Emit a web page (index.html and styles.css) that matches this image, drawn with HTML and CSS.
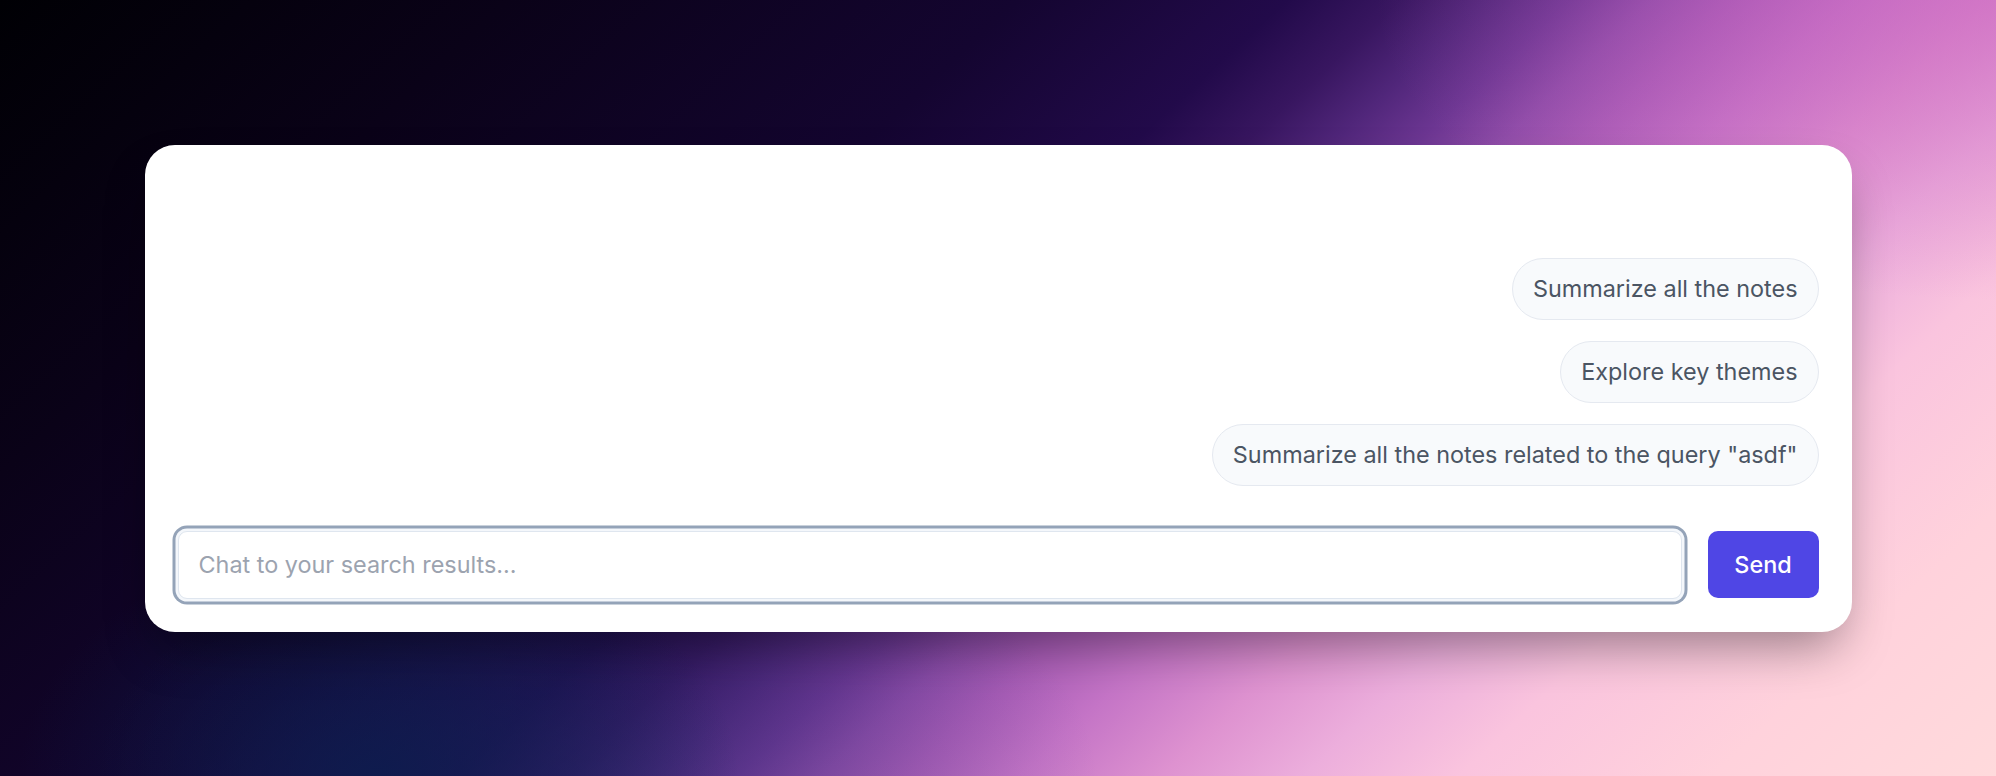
FILE: index.html
```html
<!DOCTYPE html>
<html lang="en">
<head>
<meta charset="utf-8">
<title>Chat</title>
<link rel="stylesheet" href="styles.css">
</head>
<body>
  <main class="card">
    <div class="messages">
      <button class="chip">Summarize all the notes</button>
      <button class="chip">Explore key themes</button>
      <button class="chip">Summarize all the notes related to the query "asdf"</button>
    </div>
    <form class="composer">
      <input class="chat-input" type="text" placeholder="Chat to your search results...">
      <button class="send" type="button">Send</button>
    </form>
  </main>
</body>
</html>
```
FILE: styles.css
```css
* { box-sizing: border-box; }
html, body { height: 100%; }
body {
  margin: 0;
  font-family: Inter, "Noto Sans", sans-serif;
  display: flex;
  align-items: center;
  justify-content: center;
  background:
    radial-gradient(ellipse 620px 300px at 100% 0%, rgba(200, 95, 190, 0.55) 0, rgba(200, 95, 190, 0) 100%),
    radial-gradient(ellipse 360px 240px at 19% 100%, rgba(10, 30, 78, 0.8) 0, rgba(10, 30, 78, 0) 100%),
    radial-gradient(ellipse 500px 260px at 30% 100%, rgba(40, 50, 120, 0.35) 0, rgba(40, 50, 120, 0) 100%),
    linear-gradient(137deg,
      #000004 0%,
      #0a0218 18%,
      #140530 36%,
      #220a4a 45.5%,
      #381660 49.5%,
      #50267a 52.5%,
      #6c3692 55.5%,
      #8e4ca8 58.5%,
      #a85cb6 61.5%,
      #c474c6 65.5%,
      #de92d0 70.5%,
      #ecaedc 75.5%,
      #fac4de 81%,
      #ffd2dc 90%,
      #ffdadc 100%);
}
.card {
  width: 1707px;
  height: 487px;
  background: #fff;
  border-radius: 30px;
  padding: 33px;
  display: flex;
  flex-direction: column;
  box-shadow: 0 25px 50px -12px rgba(0, 0, 0, 0.4);
}
.messages {
  flex: 1;
  display: flex;
  flex-direction: column;
  align-items: flex-end;
  justify-content: flex-end;
  gap: 21px;
}
.chip {
  font-family: inherit;
  font-size: 23.4px;
  line-height: 28px;
  color: #4b5563;
  background: #f8fafc;
  border: 1px solid #e5e9f0;
  border-radius: 31px;
  padding: 16px 20px;
  cursor: pointer;
}
.composer {
  margin: 45px 0 0;
  display: flex;
  gap: 26px;
  height: 68px;
}
.chat-input {
  flex: 1;
  font-family: inherit;
  font-size: 23.4px;
  color: #374151;
  border: 1.5px solid #dfe6ef;
  border-radius: 9px;
  padding: 0 20px;
  outline: none;
  box-shadow: 0 0 0 2.5px #f4f7fb, 0 0 0 5.5px #94a3b8;
}
.chat-input::placeholder { color: #9ca3af; }
.send {
  width: 111px;
  height: 67px;
  font-family: inherit;
  font-size: 23.4px;
  font-weight: 500;
  color: #fff;
  background: #4f46e5;
  border: none;
  border-radius: 10px;
  cursor: pointer;
}
```
